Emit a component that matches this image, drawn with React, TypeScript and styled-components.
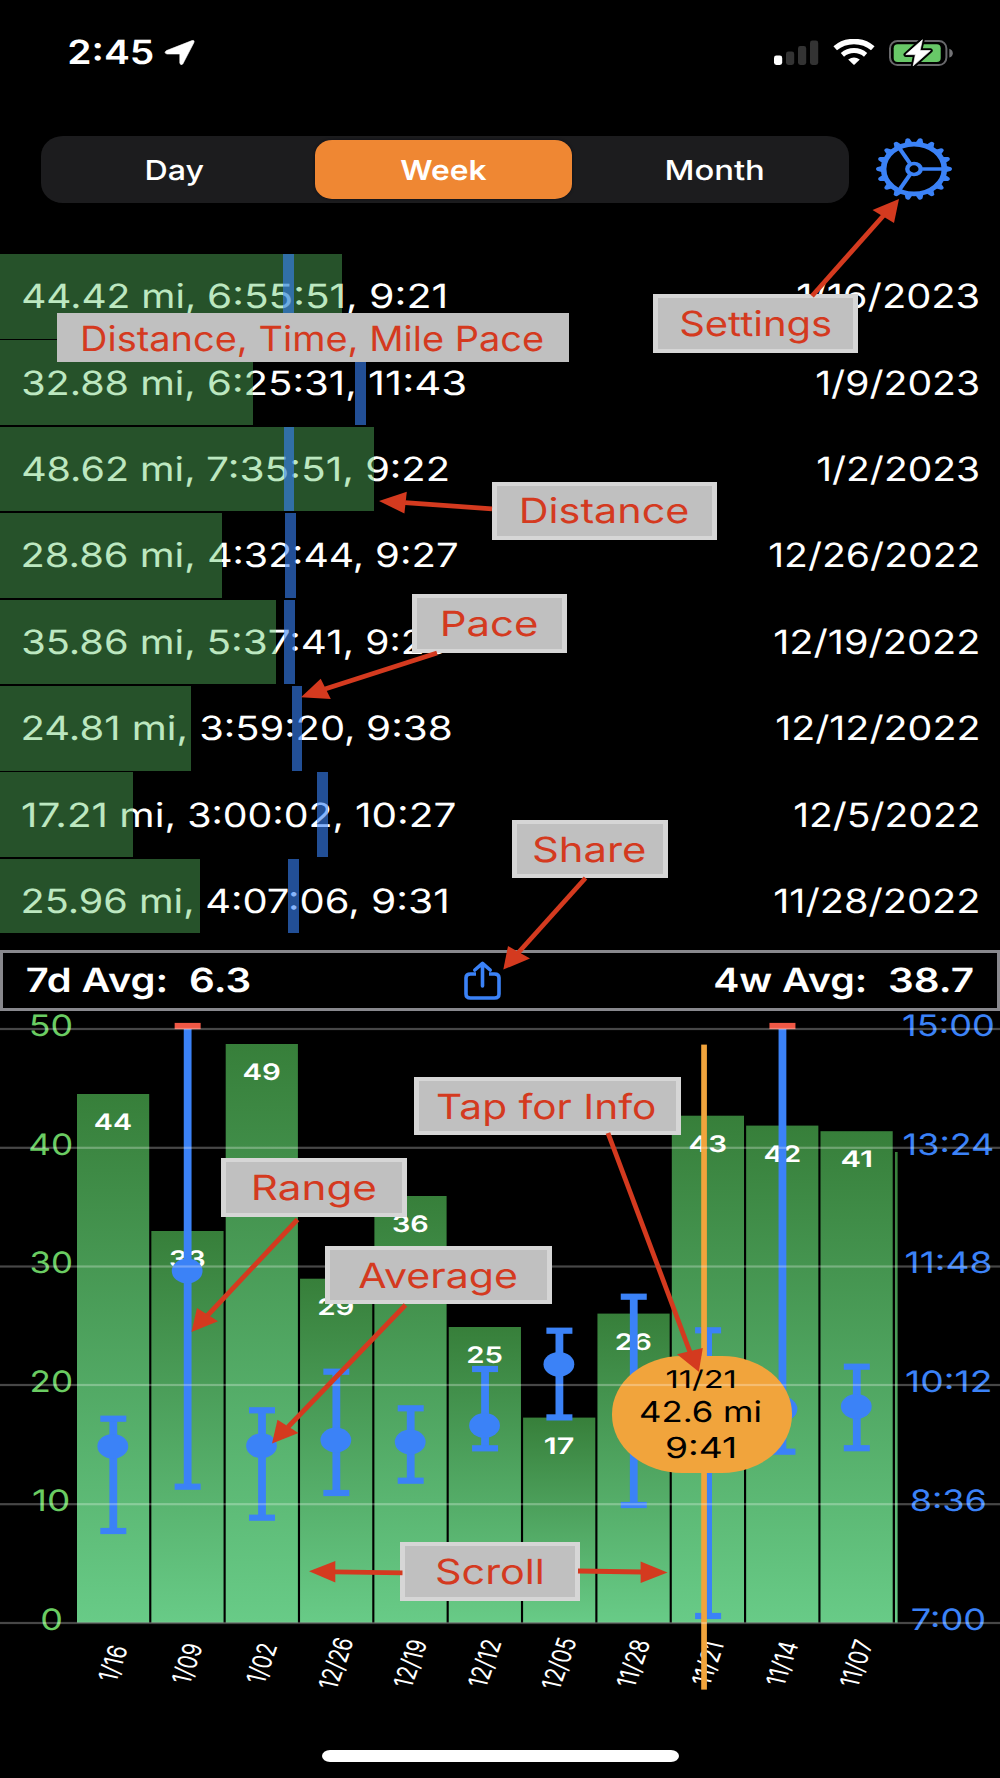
import React, { useLayoutEffect, useState } from "react";
import styled, { createGlobalStyle } from "styled-components";

const UI_FONT = 'Inter, "Liberation Sans", sans-serif';
const BLUE = "#3b82f7";
const RED = "#d43a1f";

const GlobalStyle = createGlobalStyle`
  * { box-sizing: border-box; }
  html, body { margin: 0; padding: 0; background: #000; }
`;

/* ---------- stretched text ---------- */

/* Bounds are measured on an enlarged copy so that they are not rounded to whole pixels. */
function inkOf(text: string, size: number, weight: number) {
  const zoom = 8;
  const ctx = document.createElement("canvas").getContext("2d")!;
  ctx.font = `${weight} ${size * zoom}px ${UI_FONT}`;
  const m = ctx.measureText(text);
  return {
    left: -m.actualBoundingBoxLeft / zoom,
    width: (m.actualBoundingBoxLeft + m.actualBoundingBoxRight) / zoom,
  };
}

function useFit(text: string, width: number, size: number, weight: number) {
  const [fit, setFit] = useState({ k: 1.2, dx: 0 });
  useLayoutEffect(() => {
    const ink = inkOf(text, size, weight);
    const k = width / ink.width;
    setFit({ k, dx: -ink.left * k });
  }, [text, width, size, weight]);
  return fit;
}

const FitBox = styled.span<{ $w: number; $size: number }>`
  display: block;
  flex: none;
  width: ${(p) => p.$w}px;
  height: ${(p) => p.$size}px;
  line-height: ${(p) => p.$size}px;
  text-align: left;
`;
const FitInk = styled.span<{ $size: number; $weight: number; $color: string }>`
  display: inline-block;
  white-space: pre;
  transform-origin: 0 50%;
  font-family: ${UI_FONT};
  font-size: ${(p) => p.$size}px;
  font-weight: ${(p) => p.$weight};
  color: ${(p) => p.$color};
  line-height: ${(p) => p.$size}px;
  vertical-align: top;
  text-rendering: geometricPrecision;
`;

type FitProps = { children: string; width: number; size: number; weight?: number; color?: string };
function Fit({ children, width, size, weight = 400, color = "#fff" }: FitProps) {
  const { k, dx } = useFit(children, width, size, weight);
  return (
    <FitBox $w={width} $size={size}>
      <FitInk $size={size} $weight={weight} $color={color}
        style={{ transform: `translate(${dx}px, 0.8px) scaleX(${k})` }}>
        {children}
      </FitInk>
    </FitBox>
  );
}

const SvgText = styled.text<{ $size: number; $weight: number }>`
  font-family: ${UI_FONT};
  font-size: ${(p) => p.$size}px;
  font-weight: ${(p) => p.$weight};
  text-rendering: geometricPrecision;
`;
const DateText = styled(SvgText)`
  font-kerning: none;
  font-feature-settings: "kern" 0, "calt" 0;
`;
type ChartTextProps = { children: string; cx: number; y: number; width: number; size: number; weight?: number; fill: string };
function ChartText({ children, cx, y, width, size, weight = 400, fill }: ChartTextProps) {
  const { k, dx } = useFit(children, width, size, weight);
  return (
    <SvgText $size={size} $weight={weight} fill={fill}
      transform={`translate(${cx - width / 2 + dx} ${y}) scale(${k} 1)`}>
      {children}
    </SvgText>
  );
}

/* ---------- page ---------- */

const Screen = styled.main`
  position: relative;
  display: flex;
  flex-direction: column;
  width: 1000px;
  height: 1778px;
  overflow: hidden;
  background: #000;
  font-family: ${UI_FONT};
`;

const StatusBar = styled.header`
  display: flex;
  justify-content: space-between;
  align-items: flex-start;
  height: 135.5px;
  padding: 36px 46px 0 69px;
`;
const StatusGroup = styled.div<{ $gap: number }>`
  display: flex;
  align-items: center;
  gap: ${(p) => p.$gap}px;
  height: 33px;
`;

const Toolbar = styled.nav`
  display: flex;
  align-items: flex-start;
  height: 118.5px;
  padding: 0 47px 0 41px;
`;
const Segments = styled.div`
  display: grid;
  grid-template-columns: 274px 257px 277px;
  width: 808px;
  height: 67.5px;
  padding: 4px 0;
  border-radius: 22px / 20px;
  background: #1c1c1e;
`;
const Segment = styled.button<{ $active?: boolean; $shift?: number }>`
  display: flex;
  align-items: center;
  justify-content: flex-start;
  padding: 1px 0 0 ${(p) => p.$shift ?? 0}px;
  border: 0;
  border-radius: 17px / 15px;
  background: ${(p) => (p.$active ? "#ef8733" : "transparent")};
  box-shadow: ${(p) => (p.$active ? "0 0 3px rgba(8, 10, 24, 0.8)" : "none")};
`;
const GearButton = styled.button`
  display: flex;
  margin: 1.5px 0 0 auto;
  padding: 0;
  border: 0;
  background: none;
`;

const List = styled.section`
  display: flex;
  flex-direction: column;
  gap: 1.8px;
  height: 679.3px;
  overflow: hidden;
`;
const Row = styled.div`
  position: relative;
  display: flex;
  flex: none;
  align-items: center;
  justify-content: space-between;
  height: 84.6px;
  padding: 1.4px 22.5px 0;
`;
const RunStats = styled.div`
  display: flex;
  gap: 16px;
`;
const DistanceBar = styled.div`
  position: absolute;
  inset: 0 auto 0 0;
  background: rgba(92, 200, 102, 0.41);
`;
const PaceMark = styled.div`
  position: absolute;
  top: 0;
  bottom: 0;
  width: 10.6px;
  background: rgba(56, 131, 250, 0.6);
`;

const Summary = styled.section`
  display: flex;
  align-items: center;
  height: 61px;
  margin-top: 16.7px;
  padding: 1px 24px 0;
  border: 3px solid #88888d;
`;
const Pair = styled.div`
  display: flex;
  gap: 25px;
`;
const ShareButton = styled.button`
  display: flex;
  margin: 0 214px 0 215px;
  padding: 0;
  border: 0;
  background: none;
`;

const ChartArea = styled.section`
  display: flex;
  height: 739px;
`;
const ChartSvg = styled.svg`
  overflow: visible;
`;
const HomeRow = styled.footer`
  display: flex;
  justify-content: center;
`;
const HomeIndicator = styled.div`
  width: 357px;
  height: 11.6px;
  border-radius: 8px / 6px;
  background: #fff;
`;

const Bubble = styled.div`
  position: absolute;
  left: 612px;
  top: 1356.3px;
  width: 179.5px;
  height: 116.6px;
  display: flex;
  flex-direction: column;
  align-items: center;
  border-radius: 70px / 58px;
  background: #f1a43c;
  padding: 10px 2px 0 0;
  gap: 6.6px;
  & > span { position: relative; z-index: 1; }
`;
const Overlay = styled.svg<{ $top?: boolean }>`
  position: absolute;
  inset: 0;
  z-index: ${(p) => (p.$top ? 3 : 0)};
  pointer-events: none;
`;
const Note = styled.div<{ $x: number; $y: number; $w: number; $h: number; $plain?: boolean; $pad: number }>`
  position: absolute;
  z-index: 2;
  left: ${(p) => p.$x}px;
  top: ${(p) => p.$y}px;
  width: ${(p) => p.$w}px;
  height: ${(p) => p.$h}px;
  display: flex;
  align-items: center;
  padding-top: ${(p) => (p.$plain ? 1.4 : 0)}px;
  padding-left: ${(p) => p.$pad}px;
  background: #c0c0c0;
  box-shadow: ${(p) => (p.$plain ? "none" : "inset 5px 0 #d6d6d6, inset -5px 0 #d6d6d6, inset 0 4px #d6d6d6, inset 0 -4px #d6d6d6")};
`;

/* ---------- icons ---------- */

function LocationIcon() {
  return (
    <svg width="32" height="27" viewBox="0 0 32 27">
      <path d="M2.5 11.6 L28 1.6 Q31 .8 29.8 3.8 L18.8 25 Q16.6 27 15.8 24 V15 H3 Q-.6 14 2.5 11.6Z" fill="#fff" stroke="#fff" strokeWidth=".6" strokeLinejoin="round" />
    </svg>
  );
}
function SignalIcon() {
  return (
    <svg width="45" height="26" viewBox="0 0 45 26">
      <rect x="0" y="15.6" width="8.2" height="9.4" rx="2.4" fill="#fff" />
      <rect x="12" y="11.5" width="8.2" height="13.5" rx="2.4" fill="#333" />
      <rect x="24" y="6" width="8.2" height="19" rx="2.4" fill="#333" />
      <rect x="36" y="0.5" width="8.2" height="24.5" rx="2.4" fill="#333" />
    </svg>
  );
}
function WifiIcon() {
  return (
    <svg width="42" height="27" viewBox="0 0 42 27">
      <g fill="none" stroke="#fff">
        <path d="M2.2 9.3 C12.5 .2 29.5 .2 39.8 9.3" strokeWidth="5.4" />
        <path d="M9.4 15.8 C16 10.2 26 10.2 32.6 15.8" strokeWidth="5" />
      </g>
      <path d="M15.2 20.6 Q21 16.2 26.8 20.6 L21.6 25.6 Q21 26 20.4 25.6Z" fill="#fff" />
    </svg>
  );
}
function BatteryIcon() {
  const bolt = "M33.4 1.8 L16.8 16.6 H26.4 L24.2 27.8 L41.4 12.6 H31Z";
  return (
    <svg width="65" height="30" viewBox="0 0 65 30">
      <rect x="1" y="2.9" width="56.4" height="24.2" rx="7.5" fill="none" stroke="#68686b" strokeWidth="2" />
      <path d="M60.3 10.8 Q63.8 12 63.8 15.2 Q63.8 18.4 60.3 19.6Z" fill="#737376" />
      <rect x="4.7" y="6.2" width="47" height="17.8" rx="4" fill="#68c868" />
      <path d={bolt} stroke="#000" strokeWidth="4.6" strokeLinejoin="round" />
      <path d={bolt} fill="#fff" stroke="#fff" strokeWidth=".7" strokeLinejoin="round" />
    </svg>
  );
}
function GearIcon() {
  const teeth = Array.from({ length: 18 }, (_, i) => i * 20);
  return (
    <svg width="78" height="64" viewBox="-39 -32 78 64">
      <g transform="scale(1.22 1)" fill="none" stroke={BLUE}>
        <circle r="24.9" strokeWidth="4.6" />
        <circle r="5.5" strokeWidth="3.6" />
        {[0, 120, 240].map((a) => (
          <path key={a} d="M6.6 0H24" strokeWidth="3.5" transform={`rotate(${a})`} />
        ))}
        {teeth.map((a) => (
          <path key={a} d="M26 -3.3 L30.3 -1.7 Q32 0 30.3 1.7 L26 3.3Z" fill={BLUE} stroke="none" transform={`rotate(${a})`} />
        ))}
      </g>
    </svg>
  );
}
function ShareIcon() {
  return (
    <svg width="37" height="39" viewBox="0 0 37 39" fill="none" stroke={BLUE} strokeWidth="3.6" strokeLinecap="butt" strokeLinejoin="round">
      <path d="M12 13 H6.5 Q2 13 2 16.8 V33 Q2 37 6.5 37 H30.5 Q35 37 35 33 V16.8 Q35 13 30.5 13 H25" />
      <path d="M18.5 25 V2.8 M10.8 9 L18.5 2.4 L26.2 9" strokeLinecap="round" />
    </svg>
  );
}

/* ---------- data ---------- */

type Part = [text: string, width: number];
const ROWS: { parts: Part[]; date: string; dateX: number; bar: number; mark: number }[] = [
  { parts: [["44.42 mi,", 170.5], ["6:55:51,", 146], ["9:21", 74]], date: "1/16/2023", dateX: 797.5, bar: 342, mark: 283 },
  { parts: [["32.88 mi,", 170], ["6:25:31,", 145], ["11:43", 95]], date: "1/9/2023", dateX: 816.5, bar: 253, mark: 355.3 },
  { parts: [["48.62 mi,", 169.8], ["7:35:51,", 143.2], ["9:22", 80.5]], date: "1/2/2023", dateX: 817.5, bar: 374, mark: 283.8 },
  { parts: [["28.86 mi,", 170], ["4:32:44,", 152.5], ["9:27", 80.3]], date: "12/26/2022", dateX: 769.5, bar: 222, mark: 285.3 },
  { parts: [["35.86 mi,", 170], ["5:37:41,", 142.5], ["9:25", 79.5]], date: "12/19/2022", dateX: 774.5, bar: 276, mark: 284.3 },
  { parts: [["24.81 mi,", 162.2], ["3:59:20,", 151.8], ["9:38", 82.5]], date: "12/12/2022", dateX: 776.5, bar: 191, mark: 291.5 },
  { parts: [["17.21 mi,", 150.4], ["3:00:02,", 152.1], ["10:27", 98]], date: "12/5/2022", dateX: 794.5, bar: 132.7, mark: 317 },
  { parts: [["25.96 mi,", 168.9], ["4:07:06,", 150], ["9:31", 73.7]], date: "11/28/2022", dateX: 774.5, bar: 200.3, mark: 288 },
];

type Bar = { top: number; label: string; w: number; hi: number; lo: number; dot: number; date: string; over?: boolean };
const BARS: Bar[] = [
  { top: 1094, label: "44", w: 35.5, hi: 1418.7, lo: 1531, dot: 1446.3, date: "1/16" },
  { top: 1231, label: "33", w: 34, hi: 1026, lo: 1486.7, dot: 1271, date: "1/09", over: true },
  { top: 1044, label: "49", w: 35.5, hi: 1410.3, lo: 1517.7, dot: 1445.7, date: "1/02" },
  { top: 1278.7, label: "29", w: 34, hi: 1371.7, lo: 1493, dot: 1440, date: "12/26" },
  { top: 1196, label: "36", w: 34, hi: 1408.3, lo: 1480.7, dot: 1442, date: "12/19" },
  { top: 1327, label: "25", w: 33.5, hi: 1369, lo: 1448.3, dot: 1425.5, date: "12/12" },
  { top: 1417.6, label: "17", w: 28, hi: 1330.7, lo: 1417.4, dot: 1364.3, date: "12/05" },
  { top: 1313.6, label: "26", w: 34, hi: 1296.7, lo: 1505, dot: 1420, date: "11/28" },
  { top: 1115.7, label: "43", w: 35.5, hi: 1330.3, lo: 1616, dot: 1425, date: "11/21" },
  { top: 1125.6, label: "42", w: 34.5, hi: 1026, lo: 1451.7, dot: 1409, date: "11/14", over: true },
  { top: 1131.2, label: "41", w: 29, hi: 1366.7, lo: 1448.2, dot: 1406.5, date: "11/07" },
];
const GRID = [
  { y: 1029, left: "50", lw: 39.5, lc: 51.3, right: "15:00", rw: 89 },
  { y: 1147.8, left: "40", lw: 41, lc: 50.7, right: "13:24", rw: 88 },
  { y: 1266.5, left: "30", lw: 39.5, lc: 51.3, right: "11:48", rw: 84 },
  { y: 1385, left: "20", lw: 39, lc: 51.6, right: "10:12", rw: 83 },
  { y: 1504.2, left: "10", lw: 34.5, lc: 51, right: "8:36", rw: 73 },
  { y: 1623, left: "0", lw: 18.5, lc: 51.6, right: "7:00", rw: 71.5 },
];
const barX = (i: number) => 77 + i * 74.35;

function ChartBars() {
  return (
    <ChartArea>
      <ChartSvg width="1000" height="739" viewBox="0 1011 1000 739">
        <defs>
          <linearGradient id="bar" x1="0" y1="0" x2="0" y2="1">
            <stop offset="0" stopColor="#377f3a" />
            <stop offset="1" stopColor="#68cb87" />
          </linearGradient>
        </defs>
        {BARS.map((b, i) => (
          <g key={b.date}>
            <rect x={barX(i)} y={b.top} width="72.2" height={1622.5 - b.top} fill="url(#bar)" />
            <ChartText cx={barX(i) + 36} y={b.top + 36.2} width={b.w} size={22.6} weight={600} fill="#fff">{b.label}</ChartText>
          </g>
        ))}
        <rect x="895" y="1152" width="2.6" height="470.5" fill="url(#bar)" />
        {GRID.map((g) => (
          <g key={g.left}>
            <ChartText cx={g.lc} y={g.y + 6.7} width={g.lw} size={29.4} fill="#6acc62">{g.left}</ChartText>
            <ChartText cx={948.3} y={g.y + 6.7} width={g.rw} size={29.4} fill={BLUE}>{g.right}</ChartText>
          </g>
        ))}
        {BARS.map((b, i) => {
          const c = barX(i) + 36.3;
          return (
            <g key={b.date} fill={BLUE}>
              <rect x={c - 3.9} y={b.hi} width="7.8" height={b.lo - b.hi} />
              <rect x={c - 13} y={b.hi - 3.1} width="26" height="6.2" fill={b.over ? "#ef5845" : BLUE} />
              <rect x={c - 13} y={b.lo - 3.1} width="26" height="6.2" />
              <ellipse cx={c - 0.5} cy={b.dot} rx="15.4" ry="12.4" />
              <DateText $size={22} $weight={400} fill="#fff" textAnchor="middle" dy="8"
                transform={`translate(${c - 0.6} 1663.3) scale(1.22 1) rotate(-74) scale(0.92 1)`}>
                {b.date}
              </DateText>
            </g>
          );
        })}
        <rect x="701.2" y="1044.6" width="5.7" height="645" fill="#f1a43c" />
      </ChartSvg>
    </ChartArea>
  );
}

const NOTES = [
  { x: 57, y: 313, w: 512.3, h: 49, tx: 83, tw: 460, text: "Distance, Time, Mile Pace", plain: true },
  { x: 652.7, y: 294.3, w: 205.3, h: 58.3, tx: 681, tw: 149.5, text: "Settings" },
  { x: 492.3, y: 481.7, w: 225, h: 58, tx: 522, tw: 166, text: "Distance" },
  { x: 411.7, y: 594.3, w: 155, h: 58.3, tx: 443, tw: 94, text: "Pace" },
  { x: 511.7, y: 819.7, w: 156, h: 58.3, tx: 534, tw: 111, text: "Share" },
  { x: 414.3, y: 1077, w: 267, h: 58, tx: 438.5, tw: 217, text: "Tap for Info" },
  { x: 221.3, y: 1158.3, w: 185.3, h: 58.3, tx: 254, tw: 121.5, text: "Range" },
  { x: 325.3, y: 1246, w: 226.3, h: 58.3, tx: 359, tw: 157.5, text: "Average" },
  { x: 400, y: 1542.3, w: 179.5, h: 58.3, tx: 436.5, tw: 105, text: "Scroll" },
];

const ARROWS = [
  { line: [812, 296, 884, 215], head: "899,199 872.5,210 894,223" },
  { line: [492, 508.8, 405, 502.6], head: "379,501 406.8,491.8 404.4,513.5" },
  { line: [437, 653, 325, 689], head: "301,697.3 320.7,678.8 330.8,699" },
  { line: [585.5, 878, 518, 953], head: "503.3,969.6 508,946 530,958.5" },
  { line: [608, 1133, 690, 1352], head: "698.8,1371.8 677,1354.3 702.8,1348" },
  { line: [297.5, 1219.5, 207, 1316], head: "191.5,1332 197,1308 218,1321.3" },
  { line: [405.5, 1305, 288, 1427], head: "272,1443.5 277.5,1419.8 298.5,1433" },
  { line: [402.5, 1572.8, 334, 1571.8], head: "309,1571.3 335.3,1561 335.3,1582.5" },
  { line: [578, 1571, 642, 1572], head: "667.5,1572.4 640.6,1561.4 640.6,1583" },
];

export default function App() {
  return (
    <Screen>
      <GlobalStyle />
      <StatusBar>
        <StatusGroup $gap={11}>
          <Fit width={84} size={33.4} weight={600}>2:45</Fit>
          <LocationIcon />
        </StatusGroup>
        <StatusGroup $gap={14}>
          <SignalIcon />
          <WifiIcon />
          <BatteryIcon />
        </StatusGroup>
      </StatusBar>

      <Toolbar>
        <Segments>
          <Segment $shift={105.8}><Fit width={56.5} size={27.6} weight={500}>Day</Fit></Segment>
          <Segment $active $shift={85.8}><Fit width={85.5} size={27.6} weight={600}>Week</Fit></Segment>
          <Segment $shift={95.2}><Fit width={95.5} size={27.6} weight={500}>Month</Fit></Segment>
        </Segments>
        <GearButton><GearIcon /></GearButton>
      </Toolbar>

      <List>
        {ROWS.map((r) => (
          <Row key={r.date}>
            <RunStats>
              {r.parts.map(([text, width]) => (
                <Fit key={text} width={width} size={33.4}>{text}</Fit>
              ))}
            </RunStats>
            <Fit width={977.5 - r.dateX} size={33.4}>{r.date}</Fit>
            <DistanceBar style={{ width: r.bar }} />
            <PaceMark style={{ left: r.mark }} />
          </Row>
        ))}
      </List>

      <Summary>
        <Pair>
          <Fit width={138.5} size={33.4} weight={600}>7d Avg:</Fit>
          <Fit width={58.5} size={33.4} weight={600}>6.3</Fit>
        </Pair>
        <ShareButton><ShareIcon /></ShareButton>
        <Pair>
          <Fit width={149.5} size={33.4} weight={600}>4w Avg:</Fit>
          <Fit width={83} size={33.4} weight={600}>38.7</Fit>
        </Pair>
      </Summary>

      <ChartBars />

      <HomeRow><HomeIndicator /></HomeRow>

      <Bubble>
        <Fit width={67} size={24.4} color="#000">11/21</Fit>
        <Fit width={119} size={28.8} color="#000">42.6 mi</Fit>
        <Fit width={67} size={28.8} color="#000">9:41</Fit>
      </Bubble>

      <Overlay width="1000" height="1778">
        {GRID.map((g) => (
          <rect key={g.y} x="0" y={g.y - 1.1} width="1000" height="2.2" fill="#fff" fillOpacity="0.28" />
        ))}
      </Overlay>

      {NOTES.map((n) => (
        <Note key={n.text} $x={n.x} $y={n.y} $w={n.w} $h={n.h} $plain={n.plain} $pad={n.tx - n.x}>
          <Fit width={n.tw} size={34.6} color={RED}>{n.text}</Fit>
        </Note>
      ))}

      <Overlay $top width="1000" height="1778">
        {ARROWS.map((a) => (
          <g key={a.head}>
            <line x1={a.line[0]} y1={a.line[1]} x2={a.line[2]} y2={a.line[3]} stroke={RED} strokeWidth="4.8" />
            <polygon points={a.head} fill={RED} />
          </g>
        ))}
      </Overlay>
    </Screen>
  );
}
